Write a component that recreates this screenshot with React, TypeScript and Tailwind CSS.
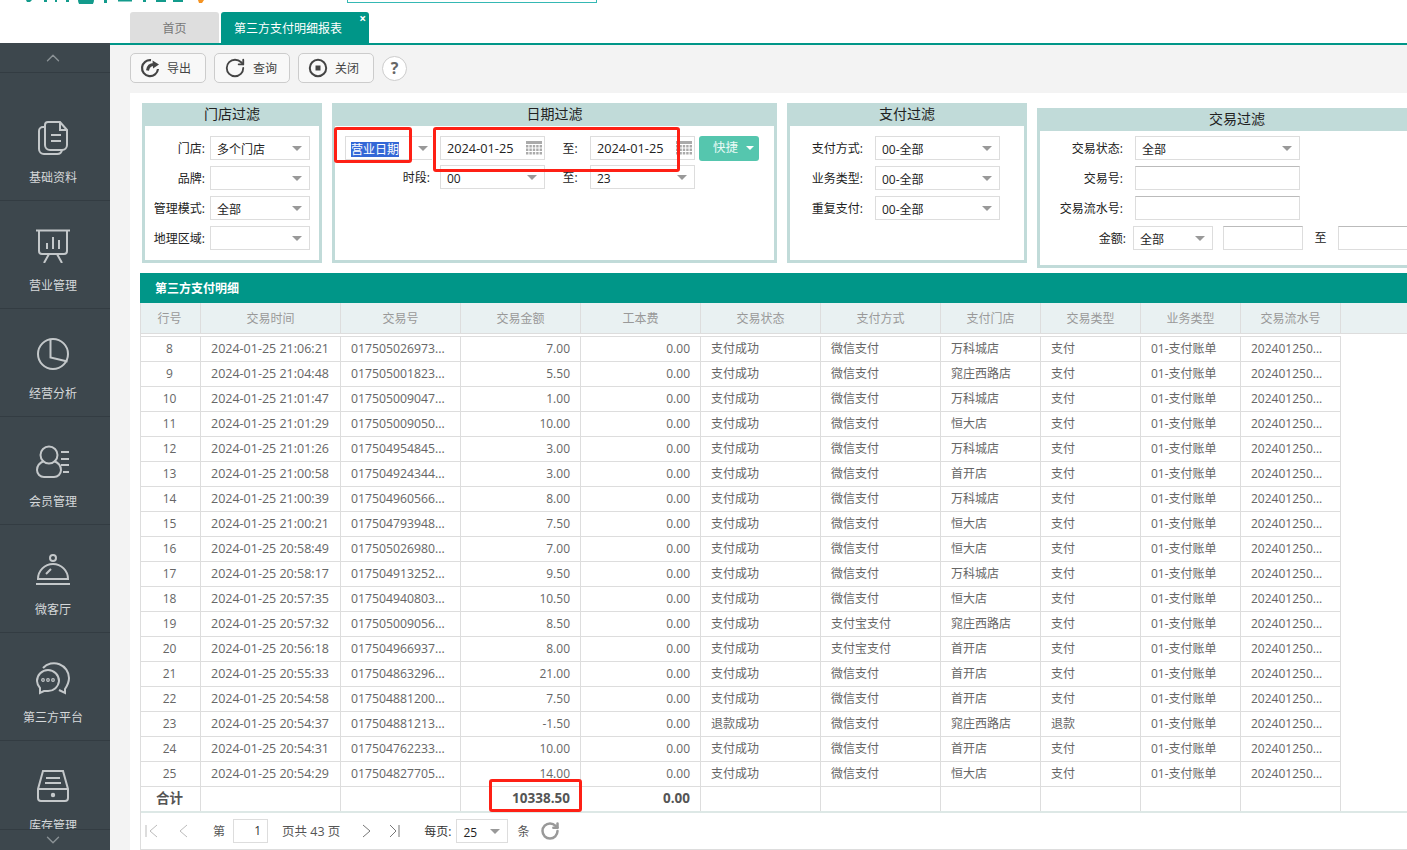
import type { ReactNode } from 'react'
import { ChevronDown, ChevronUp, RotateCw } from 'lucide-react'

const font = { fontFamily: '"Open Sans", "Noto Sans CJK SC", sans-serif' }

const rows = [
  ['8', '2024-01-25 21:06:21', '017505026973...', '7.00', '支付成功', '微信支付', '万科城店', '支付'],
  ['9', '2024-01-25 21:04:48', '017505001823...', '5.50', '支付成功', '微信支付', '窕庄西路店', '支付'],
  ['10', '2024-01-25 21:01:47', '017505009047...', '1.00', '支付成功', '微信支付', '万科城店', '支付'],
  ['11', '2024-01-25 21:01:29', '017505009050...', '10.00', '支付成功', '微信支付', '恒大店', '支付'],
  ['12', '2024-01-25 21:01:26', '017504954845...', '3.00', '支付成功', '微信支付', '万科城店', '支付'],
  ['13', '2024-01-25 21:00:58', '017504924344...', '3.00', '支付成功', '微信支付', '首开店', '支付'],
  ['14', '2024-01-25 21:00:39', '017504960566...', '8.00', '支付成功', '微信支付', '万科城店', '支付'],
  ['15', '2024-01-25 21:00:21', '017504793948...', '7.50', '支付成功', '微信支付', '恒大店', '支付'],
  ['16', '2024-01-25 20:58:49', '017505026980...', '7.00', '支付成功', '微信支付', '恒大店', '支付'],
  ['17', '2024-01-25 20:58:17', '017504913252...', '9.50', '支付成功', '微信支付', '万科城店', '支付'],
  ['18', '2024-01-25 20:57:35', '017504940803...', '10.50', '支付成功', '微信支付', '恒大店', '支付'],
  ['19', '2024-01-25 20:57:32', '017505009056...', '8.50', '支付成功', '支付宝支付', '窕庄西路店', '支付'],
  ['20', '2024-01-25 20:56:18', '017504966937...', '8.00', '支付成功', '支付宝支付', '首开店', '支付'],
  ['21', '2024-01-25 20:55:33', '017504863296...', '21.00', '支付成功', '微信支付', '首开店', '支付'],
  ['22', '2024-01-25 20:54:58', '017504881200...', '7.50', '支付成功', '微信支付', '首开店', '支付'],
  ['23', '2024-01-25 20:54:37', '017504881213...', '-1.50', '退款成功', '微信支付', '窕庄西路店', '退款'],
  ['24', '2024-01-25 20:54:31', '017504762233...', '10.00', '支付成功', '微信支付', '首开店', '支付'],
  ['25', '2024-01-25 20:54:29', '017504827705...', '14.00', '支付成功', '微信支付', '恒大店', '支付'],
]

const widths = ['w-[60px]', 'w-[140px]', 'w-[120px]', 'w-[120px]', 'w-[120px]', 'w-[120px]', 'w-[120px]', 'w-[100px]', 'w-[100px]', 'w-[100px]', 'w-[100px]']
const headers = ['行号', '交易时间', '交易号', '交易金额', '工本费', '交易状态', '支付方式', '支付门店', '交易类型', '业务类型', '交易流水号']

function Caret() {
  return <span className="w-0 h-0 border-x-[5px] border-x-transparent border-t-[5px] border-t-[#999]" />
}

function Select({ value, width = 'w-[100px]' }: { value?: string; width?: string }) {
  return (
    <div className={`${width} h-6 shrink-0 bg-white border border-[#ddd] flex items-center justify-between pl-[6px] pr-[7px] text-[12px] text-[#222]`}>
      <span className="pt-[4px]">{value}</span>
      <Caret />
    </div>
  )
}

function Input({ width = 'w-[165px]' }: { width?: string }) {
  return <div className={`${width} h-6 shrink-0 bg-white border border-[#ddd] border-t-[#bbb]`} />
}

function Cal() {
  return (
    <svg width="16" height="14" viewBox="0 0 16 14" fill="#aaa">
      <rect x="0" y="0" width="16" height="3" />
      {[4, 7.5, 11].map(y => [0, 3.4, 6.8, 10.2, 13.6].map(x => <rect key={`${x}-${y}`} x={x} y={y} width="2.4" height="2.5" />))}
    </svg>
  )
}

function DateBox({ value }: { value: string }) {
  return (
    <div className="w-[105px] h-6 shrink-0 bg-white border border-[#ddd] flex items-center justify-between pl-[6px] pr-[2px] text-[12.75px] text-[#222]">
      <span className="pt-[2px]">{value}</span>
      <Cal />
    </div>
  )
}

function Label({ children, width }: { children: ReactNode; width: string }) {
  return <span className={`${width} shrink-0 text-right text-[12px] text-[#222] pt-[1px] whitespace-nowrap`}>{children}</span>
}

function Panel({ title, width, className = '', children }: { title: string; width: string; className?: string; children: ReactNode }) {
  return (
    <div className={`${width} h-40 shrink-0 border-[3px] border-[#c1dbd9] bg-white ${className}`}>
      <div className="h-5 bg-[#c1dbd9] flex justify-center text-[14px] text-[#222] leading-[16px]">{title}</div>
      {children}
    </div>
  )
}

function Field({ label, value }: { label: string; value?: string }) {
  return (
    <div className="flex items-center h-6">
      <Label width="w-[65px] pr-[5px]">{label}</Label>
      <Select value={value} />
    </div>
  )
}

function SideIcon({ name }: { name: string }) {
  const p = { fill: 'none', stroke: '#c4c8ca', strokeWidth: 2 }
  if (name === 'doc') return (
    <svg width="30" height="34" viewBox="0 0 30 34" {...p}>
      <path d="M7 4V24a5 5 0 0 0 5 5H24a5 5 0 0 0 5-5V9L22 1H10a3 3 0 0 0-3 3Z" />
      <path d="M22 1v8h7M13 14h10M13 20h10" />
      <path d="M7 6H5a4 4 0 0 0-4 4V28a5 5 0 0 0 5 5H19a5 5 0 0 0 5-4" />
    </svg>
  )
  if (name === 'board') return (
    <svg width="34" height="34" viewBox="0 0 34 34" {...p}>
      <path d="M0 1.5H34M3 2V22a3 3 0 0 0 3 3H28a3 3 0 0 0 3-3V2" />
      <path d="M11 20v-6M17 20V8M23 20V11M13 25l-5 9M21 25l5 9" />
    </svg>
  )
  if (name === 'pie') return (
    <svg width="34" height="32" viewBox="0 0 34 32" {...p}>
      <circle cx="17" cy="16" r="15" />
      <path d="M14.5 1.5V19.5L31.5 23.5" />
    </svg>
  )
  if (name === 'user') return (
    <svg width="34" height="34" viewBox="0 0 34 34" {...p}>
      <circle cx="13" cy="10" r="8.5" />
      <path d="M8 16C3 18 1 21 1 25a7 7 0 0 0 7 7H18a7 7 0 0 0 7-7C25 21 23 18 18 16" />
      <path d="M25 7h8M25 14h8M25 20h8M27 27h6" />
    </svg>
  )
  if (name === 'dish') return (
    <svg width="34" height="32" viewBox="0 0 34 32" {...p}>
      <circle cx="17" cy="4" r="3" />
      <path d="M2 25a15 15 0 0 1 30 0ZM0 30H34" />
      <path d="M10 20l5-5" />
    </svg>
  )
  if (name === 'chat') return (
    <svg width="34" height="34" viewBox="0 0 34 34" {...p}>
      <path d="M7 7a15 15 0 0 1 26 10c0 5-2 8-4 11l0 4-6-3" />
      <path d="M1 20a11 11 0 0 1 22 0a11 11 0 0 1-11 10H8l-4 2 0-5a11 11 0 0 1-3-7Z" />
      <circle cx="7" cy="19" r="1.3" strokeWidth="1.2" />
      <circle cx="12" cy="19" r="1.3" strokeWidth="1.2" />
      <circle cx="17" cy="19" r="1.3" strokeWidth="1.2" />
    </svg>
  )
  return (
    <svg width="32" height="32" viewBox="0 0 32 32" {...p}>
      <path d="M1 19L6 1H26L31 19V28a3 3 0 0 1-3 3H4a3 3 0 0 1-3-3Z" />
      <path d="M1 19H31M9 8H23M8 13H24" />
      <circle cx="16" cy="25" r="1.2" fill="#c4c8ca" />
    </svg>
  )
}

const sideItems = [
  ['doc', '基础资料'],
  ['board', '营业管理'],
  ['pie', '经营分析'],
  ['user', '会员管理'],
  ['dish', '微客厅'],
  ['chat', '第三方平台'],
]

function ToolButton({ icon, label }: { icon: ReactNode; label: string }) {
  return (
    <div className="w-[76px] h-[30px] bg-[#f8f8f8] border border-[#ccc] rounded-[5px] flex items-center pl-[9px] gap-[7px] text-[12px] text-[#444]">
      {icon}
      <span className="pt-[2px]">{label}</span>
    </div>
  )
}

export default function App() {
  return (
    <div className="relative w-[1407px] h-[850px] overflow-hidden bg-white flex flex-col text-[12px]" style={font}>
      {/* Top */}
      <div className="relative h-[45px] shrink-0 border-b-2 border-[#009688] pl-[130px] flex items-end gap-[2px]">
        <svg className="absolute left-[18px] top-0" width="190" height="4" viewBox="0 0 190 4">
          <path d="M8 0h6l-2 2H9ZM26 0h3v2h-3ZM37 0h2v2h-2ZM48 0h3v2h-3ZM60 0a8 8 0 0 0 16 0ZM86 0h3v3h-3ZM100 0h14v1.5h-14ZM125 0h3v2h-3ZM138 0h10v2h-10ZM155 0h10v2h-10Z" fill="#139b8c" />
          <path d="M180 0h6l-2 3h-3Z" fill="#f59322" />
        </svg>
        <div className="absolute left-[347px] top-0 w-[250px] h-[3px] border-x border-b border-[#35b8b4]" />
        <div className="w-[89px] h-[31px] pt-[3px] bg-[#dedede] rounded-t-[3px] flex items-center justify-center text-[#777]">首页</div>
        <div className="relative w-[148px] h-[31px] pt-[3px] bg-[#009688] rounded-t-[3px] flex items-center pl-[13px] text-white">
          第三方支付明细报表
          <span className="absolute right-[3px] top-[-1px] text-[12px] font-bold leading-4">×</span>
        </div>
      </div>

      <div className="flex flex-1 min-h-0">
        {/* Sidebar */}
        <div className="relative z-10 -mt-[2px] w-[110px] shrink-0 bg-[#3d474d] flex flex-col pr-1 overflow-hidden">
          <div className="-mr-1 pr-1 h-[30px] border-b border-[#333c42] flex items-center justify-center shrink-0">
            <ChevronUp size={22} strokeWidth={1.5} className="text-[#8b9296]" />
          </div>
          {sideItems.map(([icon, label], i) => (
            <div key={label} className={`${i === 0 ? 'h-[128px] pt-[48px]' : 'h-[108px] pt-[28px]'} -mr-1 pr-1 shrink-0 border-b border-[#333c42] flex flex-col items-center`}>
              <div className="h-[34px] flex items-center"><SideIcon name={icon} /></div>
              <span className="mt-[15px] text-[12px] text-[#d5d8da] leading-4">{label}</span>
            </div>
          ))}
          <div className="h-[88px] shrink-0 pt-[28px] flex flex-col items-center overflow-hidden">
            <div className="h-[34px] shrink-0 flex items-center"><SideIcon name="box" /></div>
            <span className="mt-[15px] shrink-0 text-[12px] text-[#d5d8da] leading-4">库存管理</span>
          </div>
          <div className="-mr-1 pr-1 h-[21px] shrink-0 border-t border-[#333c42] bg-[#3d474d] flex items-center justify-center">
            <ChevronDown size={22} strokeWidth={1.5} className="text-[#8b9296]" />
          </div>
        </div>

        {/* Main */}
        <div className="flex-1 min-w-0 bg-[#f3f3f3] pl-5 flex flex-col">
          <div className="h-[48px] shrink-0 pb-[2px] flex items-center gap-2">
            <ToolButton label="导出" icon={
              <svg width="20" height="20" viewBox="0 0 20 20" fill="none" stroke="#444" strokeWidth="2.2">
                <path d="M11 2.2A8 8 0 1 0 18 11" />
                <path d="M7.5 12.5C8 8.5 10.5 6.5 14 6.5" strokeWidth="3" />
                <path d="M12.5 2.5L19 6.5l-6 4Z" fill="#444" stroke="none" />
              </svg>
            } />
            <ToolButton label="查询" icon={<RotateCw size={22} strokeWidth={2} className="text-[#444]" />} />
            <ToolButton label="关闭" icon={
              <svg width="20" height="20" viewBox="0 0 20 20" fill="none">
                <circle cx="10" cy="10" r="8.2" stroke="#444" strokeWidth="2" />
                <rect x="7.5" y="7.5" width="5" height="5" fill="#444" />
              </svg>
            } />
            <div className="w-[25px] h-[25px] rounded-full bg-white border border-[#ccc] flex items-center justify-center text-[16px] font-bold text-[#666]">?</div>
          </div>

          {/* Content */}
          <div className="relative flex-1 min-h-0 bg-white pt-[10px] pl-[10px] overflow-hidden">
            <div className="flex gap-[10px] pl-[2px]">
              <Panel title="门店过滤" width="w-[180px]">
                <div className="pt-[10px] flex flex-col gap-[6px]">
                  <Field label="门店:" value="多个门店" />
                  <Field label="品牌:" />
                  <Field label="管理模式:" value="全部" />
                  <Field label="地理区域:" />
                </div>
              </Panel>

              <Panel title="日期过滤" width="w-[445px]">
                <div className="pt-[10px] pl-[10px] flex flex-col gap-[5px]">
                  <div className="flex items-center h-6">
                    <div className="w-[87px] h-6 shrink-0 border border-[#ddd] border-r-0 flex items-center justify-between pl-[5px] pr-[4px]">
                      <span className="mt-[2px] bg-[#3367d6] text-white leading-[15px]">营业日期</span>
                      <Caret />
                    </div>
                    <div className="w-[8px] shrink-0" />
                    <DateBox value="2024-01-25" />
                    <span className="w-[45px] shrink-0 text-center text-[#222] pl-[5px] pt-[1px]">至:</span>
                    <DateBox value="2024-01-25" />
                    <div className="ml-1 w-[60px] h-[25px] shrink-0 bg-[#55c6ae] rounded-[3px] text-[#eafaf6] text-[12.5px] flex items-center pl-[14px] gap-[8px]">
                      快捷
                      <span className="w-0 h-0 border-x-[4px] border-x-transparent border-t-[4px] border-t-white" />
                    </div>
                  </div>
                  <div className="flex items-center h-6">
                    <Label width="w-[95px] pr-[10px]">时段:</Label>
                    <Select value="00" width="w-[105px]" />
                    <span className="w-[45px] shrink-0 text-center text-[#222] pl-[5px] pt-[1px]">至:</span>
                    <Select value="23" width="w-[105px]" />
                  </div>
                </div>
              </Panel>

              <Panel title="支付过滤" width="w-[240px]">
                <div className="pt-[10px] flex flex-col gap-[6px]">
                  <div className="flex items-center h-6"><Label width="w-[85px] pr-[12px]">支付方式:</Label><Select value="00-全部" width="w-[125px]" /></div>
                  <div className="flex items-center h-6"><Label width="w-[85px] pr-[12px]">业务类型:</Label><Select value="00-全部" width="w-[125px]" /></div>
                  <div className="flex items-center h-6"><Label width="w-[85px] pr-[12px]">重复支付:</Label><Select value="00-全部" width="w-[125px]" /></div>
                </div>
              </Panel>

              <Panel title="交易过滤" width="w-[400px]" className="mt-[5px] -mb-[5px]">
                <div className="pt-[5px] flex flex-col gap-[6px]">
                  <div className="flex items-center h-6"><Label width="w-[95px] pr-[12px]">交易状态:</Label><Select value="全部" width="w-[165px]" /></div>
                  <div className="flex items-center h-6"><Label width="w-[95px] pr-[12px]">交易号:</Label><Input /></div>
                  <div className="flex items-center h-6"><Label width="w-[95px] pr-[12px]">交易流水号:</Label><Input /></div>
                  <div className="flex items-center h-6">
                    <Label width="w-[93px] pr-[7px]">金额:</Label>
                    <Select value="全部" width="w-[80px]" />
                    <div className="w-[10px] shrink-0" />
                    <Input width="w-[80px]" />
                    <span className="w-[35px] shrink-0 text-center text-[#222]">至</span>
                    <Input width="w-[80px]" />
                  </div>
                </div>
              </Panel>
            </div>

            {/* Grid */}
            <div className="mt-[10px]">
              <div className="h-[30px] bg-[#009688] flex items-center pl-[15px] pt-[2px] text-white font-bold">第三方支付明细</div>
              <div className="border-l border-[#ddd]">
                <div className="h-[31px] bg-[#e9f1f2] border-b border-[#ddd] flex">
                  {headers.map((h, i) => (
                    <div key={h} className={`${widths[i]} ${i === 0 ? 'pr-[2px]' : ''} shrink-0 border-r border-[#ddd] pt-[2px] flex items-center justify-center text-[#999]`}>{h}</div>
                  ))}
                </div>
                <div className="pt-[2px] w-[1200px]">
                  {rows.map(r => (
                    <div key={r[0]} className="h-[25px] flex text-[#666] border-t border-[#ddd]">
                      <div className="w-[60px] pr-[2px] shrink-0 border-r border-[#ddd] flex items-center justify-center">{r[0]}</div>
                      <div className="w-[140px] shrink-0 border-r border-[#ddd] flex items-center pl-[10px] text-[12.5px] whitespace-nowrap">{r[1]}</div>
                      <div className="w-[120px] shrink-0 border-r border-[#ddd] flex items-center pl-[10px] text-[12.25px] whitespace-nowrap">{r[2]}</div>
                      <div className="w-[120px] shrink-0 border-r border-[#ddd] flex items-center justify-end pr-[10px]">{r[3]}</div>
                      <div className="w-[120px] shrink-0 border-r border-[#ddd] flex items-center justify-end pr-[10px]">0.00</div>
                      <div className="w-[120px] shrink-0 border-r border-[#ddd] flex items-center pl-[10px]">{r[4]}</div>
                      <div className="w-[120px] shrink-0 border-r border-[#ddd] flex items-center pl-[10px]">{r[5]}</div>
                      <div className="w-[100px] shrink-0 border-r border-[#ddd] flex items-center pl-[10px]">{r[6]}</div>
                      <div className="w-[100px] shrink-0 border-r border-[#ddd] flex items-center pl-[10px]">{r[7]}</div>
                      <div className="w-[100px] shrink-0 border-r border-[#ddd] flex items-center pl-[10px]">01-支付账单</div>
                      <div className="w-[100px] shrink-0 border-r border-[#ddd] flex items-center pl-[10px]">202401250...</div>
                    </div>
                  ))}
                  <div className="h-[25px] pb-[2px] flex text-[#555] font-bold text-[13.5px] border-t border-[#ddd]">
                    {widths.map((w, i) => (
                      <div key={i} className={`${w} shrink-0 border-r border-[#ddd] -mb-[2px] pb-[2px] flex items-center ${i === 0 ? 'justify-center pr-[2px]' : 'justify-end pr-[10px]'}`}>
                        {i === 0 ? '合计' : i === 3 ? '10338.50' : i === 4 ? '0.00' : ''}
                      </div>
                    ))}
                  </div>
                </div>
                {/* Pager */}
                <div className="h-[38px] border-t-2 border-[#dde8e6] flex items-center text-[#555]">
                  <svg className="ml-[4px]" width="14" height="14" viewBox="0 0 14 14" fill="none" stroke="#bbb"><path d="M1 1V13M12 1L5 7l7 6" /></svg>
                  <svg className="ml-[19px]" width="10" height="14" viewBox="0 0 10 14" fill="none" stroke="#bbb"><path d="M9 1L2 7l7 6" /></svg>
                  <span className="ml-[25px] pt-[2px]">第</span>
                  <div className="ml-[8px] w-[35px] h-6 border border-[#ddd] flex items-center justify-end pr-[6px] text-[#333]">1</div>
                  <span className="ml-[14px] pt-[2px] text-[12.5px]">页共 43 页</span>
                  <svg className="ml-[22px]" width="10" height="14" viewBox="0 0 10 14" fill="none" stroke="#777"><path d="M1 1L8 7l-7 6" /></svg>
                  <svg className="ml-[17px]" width="11" height="14" viewBox="0 0 11 14" fill="none" stroke="#777"><path d="M1 1L7 7l-6 6M10 1V13" /></svg>
                  <span className="ml-[24px] pt-[2px] text-[#333] whitespace-nowrap">每页:</span>
                  <Select value="25" width="w-[52px] ml-[5px]" />
                  <span className="ml-[9px] pt-[2px]">条</span>
                  <RotateCw size={20} strokeWidth={3} className="ml-[11px] text-[#999]" />
                </div>
                <div className="border-t border-[#ddd]" />
              </div>
            </div>
          </div>
        </div>
      </div>

      {/* Red annotation boxes */}
      <div className="absolute z-20 left-[334px] top-[127px] w-[78px] h-[36px] border-[3px] border-[#fe2015] rounded-[3px]" />
      <div className="absolute z-20 left-[433px] top-[127px] w-[247px] h-[45px] border-[3px] border-[#fe2015] rounded-[3px]" />
      <div className="absolute z-20 left-[489px] top-[779px] w-[93px] h-[33px] border-[3px] border-[#fe2015] rounded-[3px]" />
    </div>
  )
}
